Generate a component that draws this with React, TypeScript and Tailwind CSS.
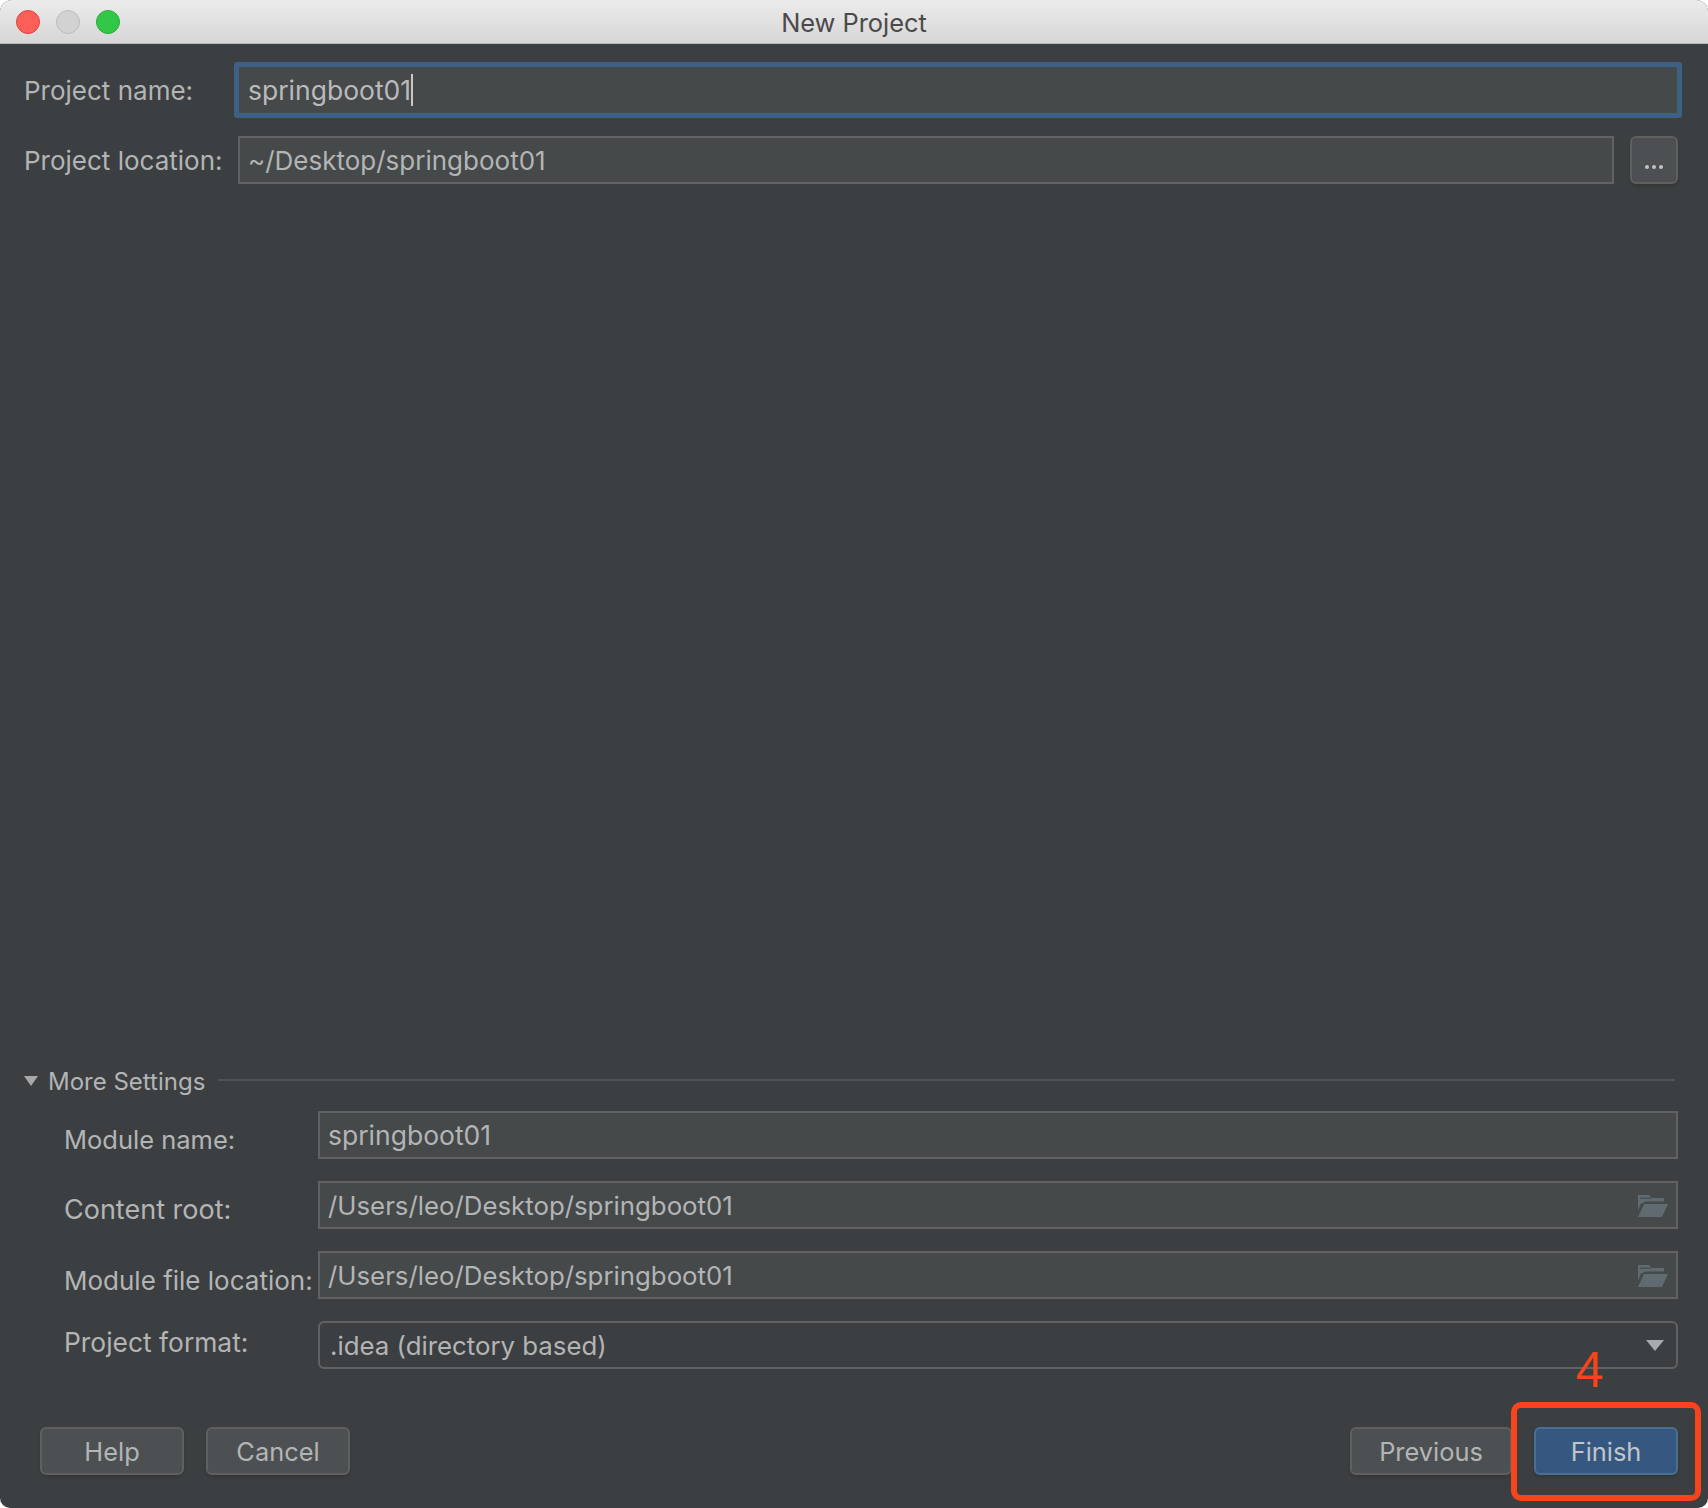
const font = "font-['Inter','Liberation_Sans',sans-serif]";

function FolderIcon() {
  return (
    <svg width="30" height="22" viewBox="0 0 30 22" className="shrink-0 mt-[2px]">
      <path d="M0 0h11l3 3h12v3.5H7.5L2.5 9 0 16V0z" fill="#5f6b70" />
      <path d="M0 22 6 9h24L24 22H0z" fill="#5f6b70" />
      <path d="M2 2.5h11v1.5H2z" fill="#4a5255" />
    </svg>
  );
}

function Field({ value, right, textClass }: { value: string; right?: React.ReactNode; textClass: string }) {
  return (
    <div className="flex-1 h-[48px] flex items-center justify-between bg-[#45494a] border-2 border-[#606263] pl-[8px] pr-[8px]">
      <span className={`text-[#b3b5b5] leading-none pt-[1px] ${textClass}`}>{value}</span>
      {right}
    </div>
  );
}

function SettingRow({ label, labelClass, children, className }: { label: string; labelClass: string; children: React.ReactNode; className: string }) {
  return (
    <div className={`h-[48px] flex items-center pl-[64px] pr-[30px] ${className}`}>
      <div className={`w-[254px] text-[#b3b5b5] whitespace-nowrap ${labelClass}`}>{label}</div>
      {children}
    </div>
  );
}

function Btn({ label, blue, className }: { label: string; blue?: boolean; className?: string }) {
  return (
    <div
      className={`h-[48px] flex items-center justify-center pt-[2px] rounded-[6px] border-2 shadow-[0_2px_3px_rgba(0,0,0,0.15)] ${
        blue ? 'bg-[#365880] border-[#4a6f93] text-[#c0c5cb]' : 'bg-[#4c5052] border-[#5e6060] text-[#b3b5b5]'
      } ${className ?? ''}`}
    >
      {label}
    </div>
  );
}

export default function App() {
  return (
    <div className={`relative w-[1708px] h-[1508px] flex flex-col bg-[#3c3f41] rounded-t-[12px] rounded-b-[10px] overflow-hidden text-[26px] ${font}`}>
      {/* Title bar */}
      <div className="relative h-[44px] shrink-0 flex items-center pl-[16px] gap-[16px] bg-gradient-to-b from-[#ececec] to-[#d6d6d6] border-b border-[#b8b8b8]">
        <div className="w-[24px] h-[24px] rounded-full bg-[#fc5f57] border border-[#e0443e]" />
        <div className="w-[24px] h-[24px] rounded-full bg-[#d2d2d2] border border-[#bdbdbd]" />
        <div className="w-[24px] h-[24px] rounded-full bg-[#33c748] border border-[#2bac3c]" />
        <div className="absolute inset-0 flex items-center justify-center pt-[4px] text-[25.4px] text-[#4a4a4a]">New Project</div>
      </div>

      {/* Project name + location */}
      <div className="flex items-center mt-[18px] pl-[24px] pr-[26px]">
        <div className="w-[210px] text-[#b3b5b5] whitespace-nowrap">Project name:</div>
        <div className="flex-1 h-[56px] flex items-center pl-[9px] bg-[#45494a] border-[5px] border-[#3d6185] rounded-[3px]">
          <span className="text-[26.5px] text-[#b9bbbb] leading-none pt-[1px]">springboot01</span>
          <span className="w-[2px] h-[32px] bg-[#c8c8c8]" />
        </div>
      </div>
      <div className="flex items-center mt-[18px] pl-[24px] pr-[30px]">
        <div className="w-[214px] text-[#b3b5b5] whitespace-nowrap">Project location:</div>
        <Field value="~/Desktop/springboot01" textClass="text-[26px]" />
        <div className="ml-[16px] w-[48px] h-[48px] flex items-end justify-center gap-[3px] pb-[13px] bg-[#4c5052] border-2 border-[#5e6060] rounded-[6px] shadow-[0_2px_3px_rgba(0,0,0,0.15)]">
          <span className="w-[4px] h-[4px] rounded-full bg-[#c2c2c2]" />
          <span className="w-[4px] h-[4px] rounded-full bg-[#c2c2c2]" />
          <span className="w-[4px] h-[4px] rounded-full bg-[#c2c2c2]" />
        </div>
      </div>

      <div className="flex-1" />

      {/* More Settings */}
      <div className="flex items-center pl-[24px] pr-[33px] h-[40px]">
        <svg width="14" height="10" viewBox="0 0 14 10" className="shrink-0">
          <path d="M0 0h14L7 10z" fill="#a8a8a8" />
        </svg>
        <span className="ml-[10px] pt-[1px] text-[24px] text-[#b3b5b5] whitespace-nowrap">More Settings</span>
        <div className="flex-1 ml-[13px] mb-[2px] h-[2px] bg-[#515355]" />
      </div>

      <SettingRow label="Module name:" labelClass="pt-[11px] text-[25.5px]" className="mt-[10px]">
        <Field value="springboot01" textClass="text-[26.5px]" />
      </SettingRow>
      <SettingRow label="Content root:" labelClass="pt-[11px] text-[27px]" className="mt-[22px]">
        <Field value="/Users/leo/Desktop/springboot01" textClass="text-[25.8px]" right={<FolderIcon />} />
      </SettingRow>
      <SettingRow label="Module file location:" labelClass="pt-[11px] text-[26px]" className="mt-[22px]">
        <Field value="/Users/leo/Desktop/springboot01" textClass="text-[25.8px]" right={<FolderIcon />} />
      </SettingRow>
      <SettingRow label="Project format:" labelClass="pb-[4px] text-[26.4px]" className="mt-[22px]">
        <div className="flex-1 h-[48px] flex items-center justify-between bg-[#3c3f41] border-2 border-[#606263] rounded-[6px] pl-[10px] pr-[12px]">
          <span className="text-[25.8px] pt-[2px] text-[#b3b5b5]">.idea (directory based)</span>
          <svg width="18" height="11" viewBox="0 0 18 11">
            <path d="M0 0h18L9 11z" fill="#a8abad" />
          </svg>
        </div>
      </SettingRow>

      {/* Footer buttons */}
      <div className="flex items-center mt-[58px] mb-[33px] pl-[40px] pr-[30px] text-[25.4px]">
        <Btn label="Help" className="w-[144px]" />
        <Btn label="Cancel" className="w-[144px] ml-[22px]" />
        <div className="flex-1" />
        <Btn label="Previous" className="w-[162px]" />
        <Btn label="Finish" blue className="w-[144px] ml-[22px]" />
      </div>

      {/* Annotation */}
      <div className="absolute left-[1511px] top-[1402px] w-[190px] h-[99px] border-[6px] border-[#f8431b] rounded-[10px]" />
      <div className="absolute left-[1576px] top-[1345px] text-[50px] leading-[50px] text-[#f8431b] font-['Liberation_Sans',sans-serif]">4</div>
    </div>
  );
}
